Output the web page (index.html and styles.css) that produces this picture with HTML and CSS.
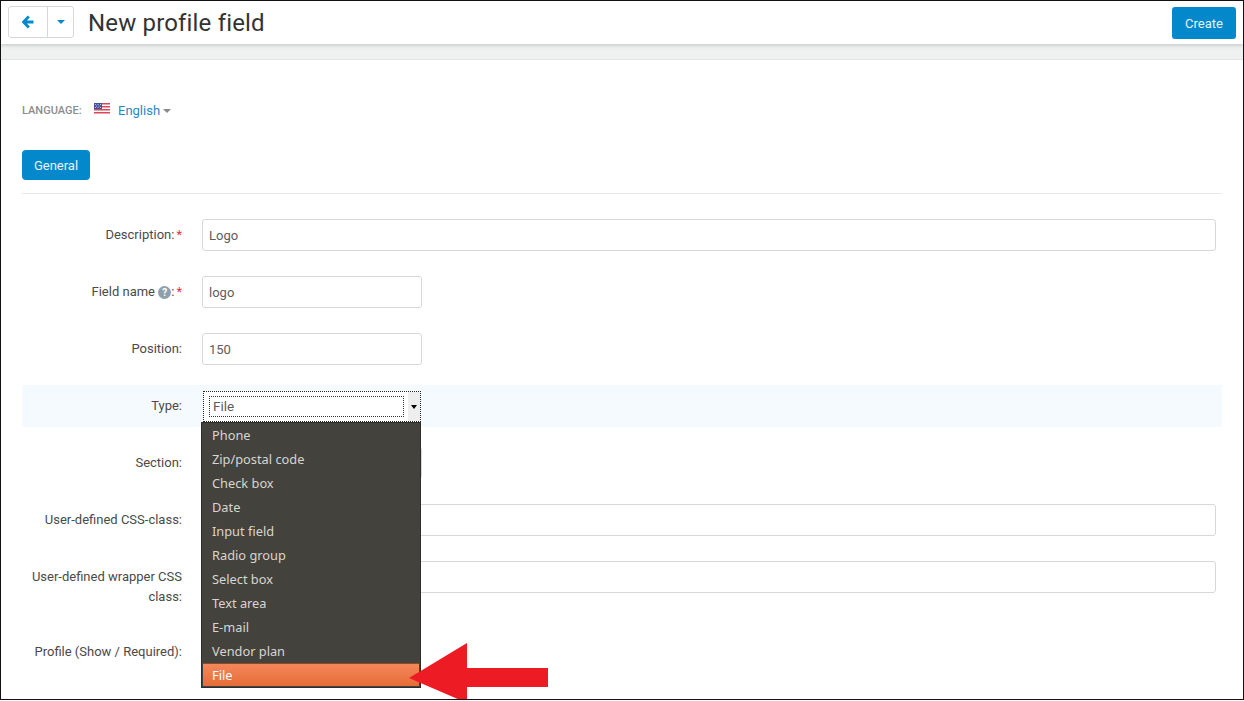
FILE: index.html
```html
<!DOCTYPE html>
<html>
<head>
<meta charset="utf-8">
<title>New profile field</title>
<link rel="stylesheet" href="styles.css">
</head>
<body>
<div class="frame">
	<div class="topbar">
		<div class="btn-group">
			<span class="btn-back">
				<svg width="14" height="14" viewBox="0 0 14 14"><path d="M6.8.6.6 7l6.2 6.4 2-2-2.9-2.9h6.6v-3H5.900l2.900-2.900z" fill="#0388cc"/></svg>
			</span>
			<span class="btn-more"><i class="caret caret-blue"></i></span>
		</div>
		<h1 class="title">New profile field</h1>
		<span class="btn btn-create">Create</span>
	</div>
	<div class="band"></div>

	<div class="content">
		<div class="lang">
			<span class="lang-label">LANGUAGE:</span>
			<svg class="flag" width="16" height="11" viewBox="0 0 16 11">
				<rect width="16" height="11" fill="#fff"/>
				<path d="M0 0h16v1.500H0zM0 3h16v1.500H0zM0 6h16v1.500H0zM0 9h16v1.500H0z" fill="#d9475a"/>
				<rect width="8" height="6" fill="#47509b"/>
				<path d="M1 1.500h1M3.500 1.500h1M6 1.500h1M2 3h1M4.500 3h1M1 4.500h1M3.500 4.500h1M6 4.500h1" stroke="#dfe2f2" stroke-width=".8"/>
			</svg>
			<span class="lang-name">English</span><i class="caret caret-gray"></i>
		</div>

		<div class="tabs"><span class="btn btn-tab">General</span></div>

		<div class="row">
			<div class="label">Description:<em>*</em></div>
			<div class="input wide">Logo</div>
		</div>
		<div class="row">
			<div class="label">Field name <span class="help">?</span>:<em>*</em></div>
			<div class="input">logo</div>
		</div>
		<div class="row">
			<div class="label">Position:</div>
			<div class="input">150</div>
		</div>
		<div class="row row-active">
			<div class="label">Type:</div>
			<div class="select">
				<div class="select-value">File</div>
				<div class="select-arrow"><i class="caret caret-black"></i></div>
				<ul class="menu">
					<li>Phone</li>
					<li>Zip/postal code</li>
					<li>Check box</li>
					<li>Date</li>
					<li>Input field</li>
					<li>Radio group</li>
					<li>Select box</li>
					<li>Text area</li>
					<li>E-mail</li>
					<li>Vendor plan</li>
					<li class="menu-on">File</li>
				</ul>
			</div>
		</div>
		<div class="row">
			<div class="label">Section:</div>
			<div class="input"></div>
		</div>
		<div class="row">
			<div class="label">User-defined CSS-class:</div>
			<div class="input wide"></div>
		</div>
		<div class="row">
			<div class="label">User-defined wrapper CSS class:</div>
			<div class="input wide"></div>
		</div>
		<div class="row row-profile">
			<div class="label">Profile (Show / Required):</div>
		</div>
	</div>

	<svg class="pointer" width="140" height="60" viewBox="0 0 140 60"><path d="M0 35 58 0V25H139V44H58V60z" fill="#ed1c24"/></svg>
</div>
</body>
</html>
```

FILE: styles.css
```css
*{ margin:0; padding:0; box-sizing:border-box;}
html, body{ height:100%; overflow:hidden;}
body{ font:13px/20px Roboto,"Liberation Sans",sans-serif; color:#444; background:#fff;}
li{ list-style:none;}
em{ font-style:normal; color:#e0324b; margin-left:2px;}

.frame{ height:700px; border:1px solid #111; position:relative; overflow:hidden; background:#fff;}

.topbar{ height:43px; display:flex; align-items:flex-start; padding:5px 7px 0 7px; position:relative; z-index:1; background:#fff; box-shadow:0 1px 4px rgba(0,0,0,.2);}
.btn-group{ display:flex; width:66px; height:32px; border:1px solid #d6d9dc; border-radius:3px; background:#fff;}
.btn-back{ width:39px; display:flex; align-items:center; justify-content:center; border-right:1px solid #d6d9dc;}
.btn-more{ flex:1; display:flex; align-items:center; justify-content:center;}
.title{ font-size:24px; line-height:34px; font-weight:400; color:#333; margin-left:14px; letter-spacing:.17px;}
.btn{ display:block; background:#0388cc; color:#e8f4fb; border-radius:3px; text-align:center;}
.btn-create{ width:64px; height:32px; line-height:33px; margin-left:auto; margin-top:1px;}
.band{ height:16px; background:#eff0f0; border-bottom:1px solid #e3e6e8;}

.caret{ display:inline-block; width:0; height:0; border-style:solid; border-color:transparent; border-width:4px 4px 0;}
.caret-blue{ border-top-color:#0388cc;}
.caret-gray{ border-top-color:#8a8a8a; margin-left:3px; vertical-align:2px;}
.caret-black{ border-top-color:#000; border-width:4px 3.5px 0;}

.content{ padding:0 21px;}
.lang{ display:flex; align-items:center; height:20px; margin-top:41px;}
.lang-label{ font-size:11px; font-weight:500; color:#8c8c8c; width:72px;}
.flag{ margin-top:-6px; margin-right:8px;}
.lang-name{ font-size:13px; color:#2c86c0;}

.tabs{ margin-top:29px; padding-bottom:13px; border-bottom:1px solid #e6e8e9;}
.btn-tab{ width:68px; height:30px; line-height:31px; border-radius:4px;}

.row{ display:flex; align-items:flex-start; gap:20px; padding:5px 0; margin-bottom:15px;}
.tabs + .row{ margin-top:20px;}
.row-active{ background:#f5faff;}
.label{ width:160px; flex:none; text-align:right; padding-top:6px; color:#4a4a4a;}
.help{ display:inline-block; width:13px; height:13px; line-height:13px; border-radius:50%; background:#8fa0ad; color:#fff; font-size:10px; font-weight:700; text-align:center;}
.input{ width:220px; height:32px; line-height:32px; padding:0 6px; border:1px solid #d8d8d8; border-radius:3px; color:#5c5c5c; background:#fff;}
.wide{ flex:1; margin-right:6px;}
.row-profile{ margin-top:-18px;}
.row-profile .label{ padding-top:28px;}

.select{ width:218px; height:31px; margin-left:1px; margin-top:1px; border:1px dotted #222; background:#fff; position:relative; display:flex; align-items:center; padding-left:5px;}
.select-value{ width:195px; height:21px; line-height:19px; padding-left:3px; border:1px dotted #333; color:#5c5c5c; font-size:13.500px;}
.select-arrow{ margin-left:auto; width:12px; height:29px; background:#eee; display:flex; align-items:center; justify-content:center;}

.menu{ position:absolute; left:-3px; top:30px; width:220px; padding-bottom:1px; background:#44423d; border:1px solid #2f2d29; z-index:2; font:12.800px/24px "Noto Sans",sans-serif; color:#d8d5ce;}
.menu li{ height:24px; padding-left:10px;}
.menu .menu-on{ color:#fff; margin:0 1px; padding-left:9px; height:23px; line-height:23px; background:linear-gradient(#f5875a,#e56d38); border-top:1px solid #8a4a2c;}

.pointer{ position:absolute; left:408px; top:642px; z-index:3;}
```
